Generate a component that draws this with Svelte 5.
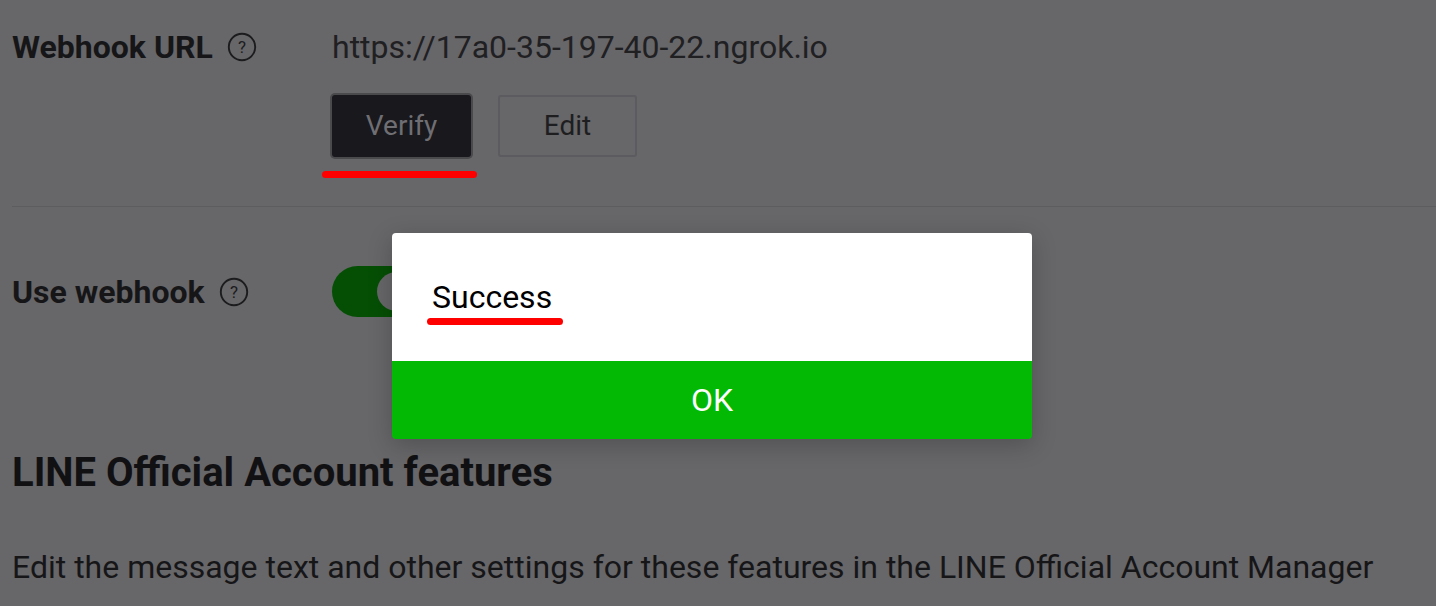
<script>
  let webhookUrl = 'https://17a0-35-197-40-22.ngrok.io';
</script>

<main class="page">
  <section class="row url-row">
    <div class="label">
      <span>Webhook URL</span>
      <svg class="help" width="30" height="30" viewBox="0 0 30 30" aria-hidden="true">
        <circle cx="15" cy="15" r="13.2" fill="none" stroke="#1c1c1e" stroke-width="1.9" />
        <text x="15" y="21" text-anchor="middle" class="help-mark">?</text>
      </svg>
    </div>
    <div class="value">
      <div class="url">{webhookUrl}</div>
      <div class="buttons">
        <button class="btn verify">Verify</button>
        <button class="btn edit">Edit</button>
      </div>
    </div>
  </section>

  <hr />

  <section class="row toggle-row">
    <div class="label">
      <span>Use webhook</span>
      <svg class="help" width="30" height="30" viewBox="0 0 30 30" aria-hidden="true">
        <circle cx="15" cy="15" r="13.2" fill="none" stroke="#1c1c1e" stroke-width="1.9" />
        <text x="15" y="21" text-anchor="middle" class="help-mark">?</text>
      </svg>
    </div>
    <div class="toggle"><div class="knob"></div></div>
  </section>

  <h2>LINE Official Account features</h2>
  <p>Edit the message text and other settings for these features in the LINE Official Account Manager</p>
</main>

<div class="dialog">
  <div class="dialog-body"><span class="message">Success</span></div>
  <button class="ok">OK</button>
</div>

<style>
  :global(body) {
    margin: 0;
    background: #676669;
    overflow: hidden;
  }

  .page {
    height: 606px;
    padding: 0 0 0 12px;
    box-sizing: border-box;
    overflow: hidden;
    font-family: Roboto, "Liberation Sans", sans-serif;
    color: #161618;
  }

  .row {
    display: flex;
  }

  .label {
    display: flex;
    align-items: center;
    font-size: 32px;
    font-weight: 700;
    line-height: 36px;
    white-space: nowrap;
  }

  .help {
    margin-left: 14px;
  }

  .help-mark {
    font-family: Roboto, sans-serif;
    font-size: 17px;
    font-weight: 400;
    fill: #1c1c1e;
  }

  .url-row {
    padding-top: 29px;
  }

  .url-row .label {
    width: 320px;
    height: 36px;
  }

  .url {
    font-size: 32px;
    line-height: 36px;
    color: #202023;
  }

  .buttons {
    display: flex;
    gap: 27px;
    margin-top: 30px;
  }

  .btn {
    box-sizing: border-box;
    font-family: inherit;
    font-size: 28px;
    height: 62px;
    padding: 0 0 2px;
    border-radius: 3px;
    position: relative;
  }

  .verify {
    width: 139px;
    background: #18181d;
    color: #6f6e73;
    border: 0;
    box-shadow: 0 0 0 2px #4a4a4d;
  }

  .verify::after {
    content: '';
    position: absolute;
    left: -10px;
    right: -6px;
    top: 76px;
    height: 7px;
    border-radius: 4px;
    background: #ff0000;
  }

  .edit {
    width: 139px;
    background: transparent;
    color: #1e1e21;
    border: 2px solid #5c5b5f;
  }

  hr {
    margin: 49px 0 0;
    border: 0;
    border-top: 1px solid #5d5c5f;
  }

  .toggle-row {
    align-items: center;
    padding-top: 59px;
  }

  .toggle-row .label {
    width: 320px;
    height: 51px;
  }

  .toggle {
    width: 130px;
    height: 51px;
    border-radius: 26px;
    background: #054f05;
    position: relative;
  }

  .knob {
    position: absolute;
    left: 45px;
    top: 6px;
    width: 39px;
    height: 39px;
    border-radius: 50%;
    background: #676669;
  }

  h2 {
    margin: 134px 0 0;
    font-size: 40px;
    font-weight: 700;
    line-height: 44px;
    color: #111113;
  }

  p {
    margin: 54px 0 0;
    font-size: 32px;
    line-height: 36px;
    white-space: nowrap;
    color: #161618;
  }

  .dialog {
    position: absolute;
    left: 392px;
    top: 233px;
    width: 640px;
    height: 206px;
    border-radius: 4px;
    overflow: hidden;
    display: flex;
    flex-direction: column;
    box-shadow: 0 6px 24px rgba(0, 0, 0, 0.22);
    font-family: Roboto, "Liberation Sans", sans-serif;
  }

  .dialog-body {
    height: 128px;
    background: #fff;
    box-sizing: border-box;
    padding: 46px 0 0 40px;
  }

  .message {
    display: inline-block;
    position: relative;
    font-size: 32px;
    line-height: 36px;
    color: #000;
  }

  .message::after {
    content: '';
    position: absolute;
    left: -5px;
    right: -11px;
    top: 39px;
    height: 7px;
    border-radius: 4px;
    background: #ff0000;
  }

  .ok {
    flex: 1;
    border: 0;
    padding: 0;
    background: #03b903;
    color: #fff;
    font-family: inherit;
    font-size: 32px;
  }
</style>
